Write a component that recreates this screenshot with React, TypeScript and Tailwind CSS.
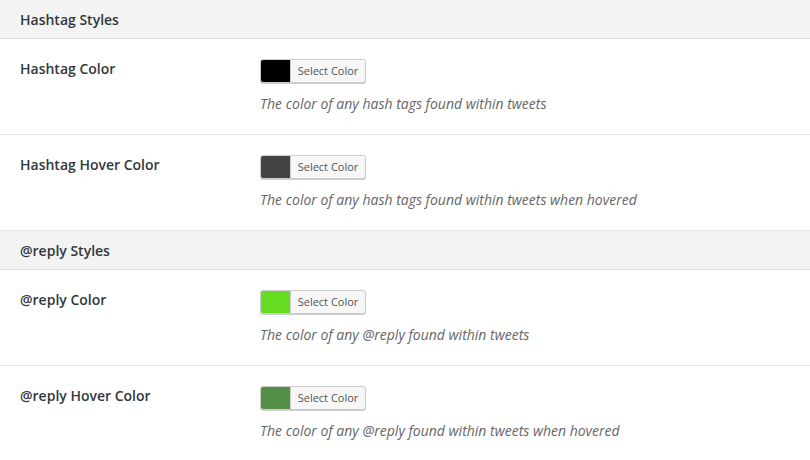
const sections = [
  {
    title: "Hashtag Styles",
    rows: [
      { label: "Hashtag Color", color: "bg-[#000000]", desc: "The color of any hash tags found within tweets" },
      { label: "Hashtag Hover Color", color: "bg-[#444444]", desc: "The color of any hash tags found within tweets when hovered" },
    ],
  },
  {
    title: "@reply Styles",
    rows: [
      { label: "@reply Color", color: "bg-[#66dd22]", desc: "The color of any @reply found within tweets" },
      { label: "@reply Hover Color", color: "bg-[#558f47]", desc: "The color of any @reply found within tweets when hovered" },
    ],
  },
];

function ColorButton({ color }: { color: string }) {
  return (
    <div className="flex h-[24px] w-[106px] overflow-hidden rounded-[3px] border border-[#cccccc] bg-[#f7f7f7] shadow-[0_1px_0_#cccccc]">
      <span className={`w-[30px] shrink-0 border-r border-[#cccccc] ${color}`}></span>
      <span className="flex flex-1 items-center justify-center text-[11px] text-[#555555]">Select Color</span>
    </div>
  );
}

export default function App() {
  return (
    <div className="w-[810px] h-[460px] overflow-hidden bg-white font-['Open_Sans',sans-serif] text-[14px] text-[#23282d]">
      {sections.map((section) => (
        <section key={section.title}>
          <div className="flex h-[39px] items-center border-b border-[#dddddd] bg-[#f3f3f3] px-5 font-semibold text-[#32373c]">
            {section.title}
          </div>
          {section.rows.map((row) => (
            <div key={row.label} className="flex h-[96px] border-b border-[#e5e5e5] px-5 pt-[20px]">
              <div className="w-[240px] shrink-0 font-semibold leading-[19px] text-[#32373c]">{row.label}</div>
              <div className="flex flex-col">
                <ColorButton color={row.color} />
                <p className="mt-[10px] italic leading-[21px] text-[#666666]">{row.desc}</p>
              </div>
            </div>
          ))}
        </section>
      ))}
    </div>
  );
}
